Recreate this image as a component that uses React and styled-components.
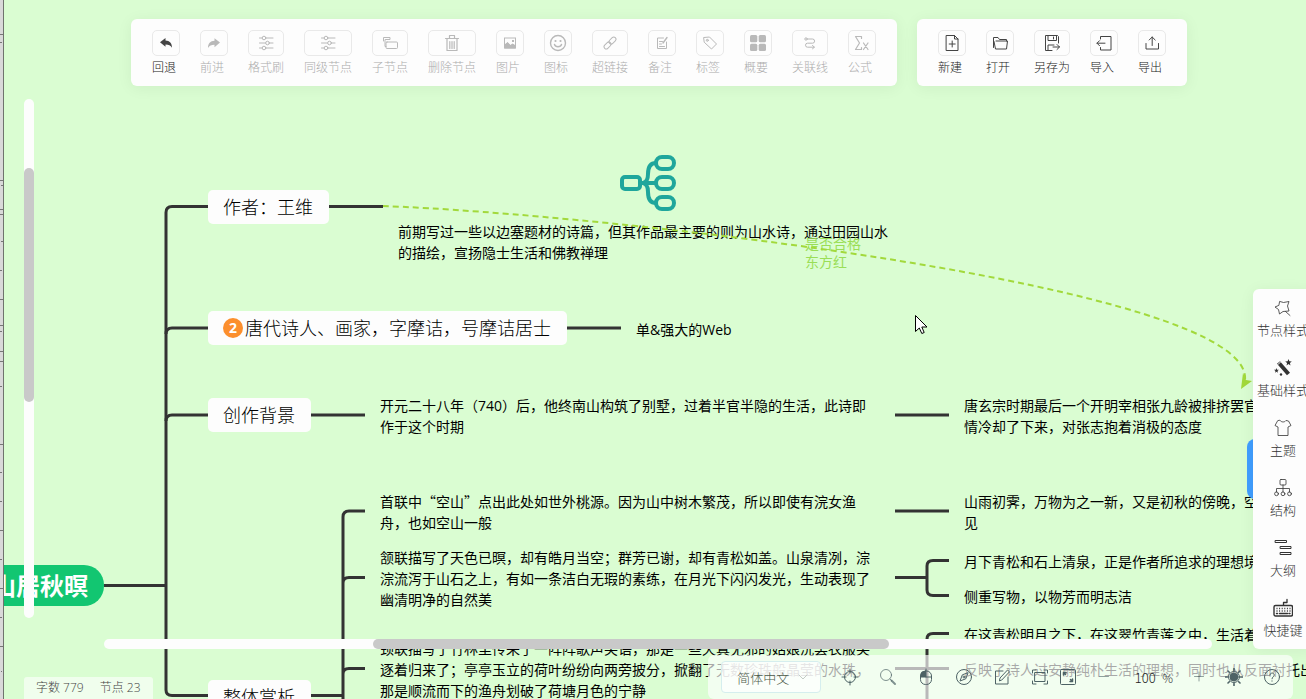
import React from 'react';
import styled, { createGlobalStyle } from 'styled-components';

const GlobalStyle = createGlobalStyle`
  * { box-sizing: border-box; }
  html, body { margin: 0; overflow: hidden; }
  body, button, select, input {
    font-family: 'Noto Sans CJK SC', sans-serif;
    font-weight: 300;
  }
`;

const Page = styled.div`
  display: flex;
  height: 100vh;
  overflow: hidden;
`;

const Gutter = styled.div`
  flex: none;
  width: 4px;
  background: #d9d9d9;
  border-right: 1px solid #6f736e;

  svg { display: block; }
`;

const Canvas = styled.main`
  position: relative;
  flex: 1;
  min-width: 0;
  overflow: hidden;
  background: #dafdd2;
`;

/* ---------- mind map ---------- */

const Board = styled.div`
  position: absolute;
  inset: 0 0 0 -4px;
`;

const Wires = styled.svg`
  position: absolute;
  left: 0;
  top: 0;
  width: 100%;
  height: 100%;
  overflow: hidden;
`;

const Placed = styled.div`
  position: absolute;
  left: ${(p) => p.$x}px;
  top: ${(p) => p.$y}px;
  white-space: nowrap;
`;

const RootTopic = styled(Placed)`
  height: 41px;
  padding: 0 16px 0 12px;
  border-radius: 20px;
  background: #12c671;
  color: #fff;
  font-size: 24px;
  font-weight: 700;
  line-height: 39px;
`;

const Topic = styled(Placed)`
  display: flex;
  align-items: center;
  gap: 2px;
  height: 34px;
  padding: 0 16px 0 15px;
  border-radius: 5px;
  background: #fdfdfd;
  color: #000;
  font-size: 18px;
  line-height: 32px;
`;

const TopicText = styled.span`
  padding-bottom: 2px;
`;

const Priority = styled.span`
  width: 20px;
  height: 20px;
  border-radius: 50%;
  background: #fc8f2d;
  color: #fff;
  font: 700 14px/20px 'Open Sans', sans-serif;
  text-align: center;
`;

const Note = styled(Placed)`
  color: ${(p) => p.$color || '#000'};
  font-family: ${(p) => (p.$latin ? "'Open Sans', " : '')}'Noto Sans CJK SC', sans-serif;
  font-size: 14px;
  font-weight: 400;
  line-height: ${(p) => p.$leading || 21}px;
`;

/* ---------- top toolbar ---------- */

const TopDock = styled.div`
  position: absolute;
  top: 19px;
  left: 8px;
  right: 0;
  display: flex;
  justify-content: center;
  gap: 20px;
`;

const Toolbar = styled.div`
  display: flex;
  gap: 20px;
  height: 67px;
  padding: 11px 21px 0;
  border-radius: 6px;
  background: #fdfdfd;
  box-shadow: 0 2px 16px rgba(0, 0, 0, 0.06);
`;

const Tool = styled.button`
  display: flex;
  flex-direction: column;
  align-items: stretch;
  gap: 3px;
  min-width: 28px;
  padding: 0;
  border: 0;
  background: none;
  color: ${(p) => (p.$off ? '#acacac' : '#222')};
  font-size: 12px;
  line-height: 16px;
  text-align: left;
  white-space: nowrap;
`;

const IconBox = styled.span`
  display: flex;
  align-items: center;
  justify-content: center;
  height: 26px;
  border: 1px solid #e9e9e9;
  border-radius: 5px;
  color: ${(p) => (p.$off ? '#b9b9b9' : '#444')};
`;

/* ---------- side panel ---------- */

const SidePanel = styled.nav`
  position: absolute;
  top: 289px;
  right: -7px;
  width: 60px;
  border-radius: 6px 0 0 6px;
  background: #fdfdfd;
  box-shadow: 0 2px 16px rgba(0, 0, 0, 0.06);
`;

const SideItem = styled.button`
  display: flex;
  flex-direction: column;
  align-items: center;
  gap: 3px;
  width: 100%;
  height: 60px;
  padding: 9px 0 0;
  border: 0;
  background: none;
  color: #333;
  font-size: 13px;
  line-height: 18px;
  white-space: nowrap;
`;

const SideHandle = styled.div`
  position: absolute;
  top: 439px;
  right: 0;
  width: 59px;
  height: 60px;
  border-radius: 8px;
  background: #409eff;
`;

/* ---------- scrollbars ---------- */

const TrackY = styled.div`
  position: absolute;
  left: 20px;
  top: 99px;
  bottom: 81px;
  width: 10px;
  padding-top: 69px;
  border-radius: 5px;
  background: #fdfdfd;
`;

const ThumbY = styled.div`
  height: 52%;
  border-radius: 5px;
  background: #c9c9c9;
`;

const TrackX = styled.div`
  position: absolute;
  left: 100px;
  right: 94px;
  bottom: 50px;
  height: 10px;
  padding-left: 269px;
  border-radius: 5px;
  background: #fdfdfd;
`;

const ThumbX = styled.div`
  width: 61.5%;
  height: 10px;
  border-radius: 5px;
  background: #c9c9c9;
`;

/* ---------- bottom bars ---------- */

const Status = styled.div`
  position: absolute;
  left: 20px;
  bottom: 0;
  display: flex;
  gap: 16px;
  height: 22px;
  padding: 0 12px;
  border-radius: 3px 3px 0 0;
  background: rgba(255, 255, 255, 0.6);
  color: #444;
  font-family: 'Open Sans', 'Noto Sans CJK SC', sans-serif;
  font-size: 12px;
  line-height: 22px;
`;

const BottomBar = styled.div`
  position: absolute;
  right: 13px;
  bottom: 0;
  display: flex;
  align-items: center;
  height: 44px;
  padding: 0 11px 0 13px;
  border-radius: 6px;
  background: rgba(255, 255, 255, 0.66);
`;

const LangWrap = styled.div`
  position: relative;
  display: flex;
  width: 100px;
  margin-right: 19px;
  color: #c4ccc4;

  svg {
    position: absolute;
    right: 12px;
    top: 10px;
  }
`;

const Lang = styled.select`
  width: 100%;
  height: 32px;
  padding: 0 15px;
  border: 1px solid #d5eeee;
  border-radius: 4px;
  background: rgba(255, 255, 255, 0.7);
  color: #4c5a4a;
  font-size: 13px;
  appearance: none;
`;

const BarButton = styled.button`
  display: flex;
  align-items: center;
  justify-content: center;
  width: 20px;
  height: 20px;
  margin-right: ${(p) => (p.$gap === undefined ? 18 : p.$gap)}px;
  padding: 0;
  border: 0;
  background: none;
  color: #4d6265;
`;

const Zoom = styled.label`
  display: flex;
  align-items: center;
  gap: 4px;
  margin-right: 16px;
  color: #333;
  font-size: 12px;
`;

const ZoomInput = styled.input`
  width: 26px;
  padding: 0;
  border: 0;
  background: none;
  color: #222;
  font-size: 13px;
  text-align: center;
`;

const Cursor = styled.svg`
  position: absolute;
  left: 911px;
  top: 315px;
`;

/* ---------- icons ---------- */

function Icon({ size = 18, w = 1, children }) {
  return (
    <svg width={size} height={size} viewBox={`0 0 ${size} ${size}`} fill="none" stroke="currentColor"
      strokeWidth={w} strokeLinecap="round" strokeLinejoin="round" aria-hidden="true">
      {children}
    </svg>
  );
}

const fill = { fill: 'currentColor', stroke: 'none' };

const Sliders = (
  <>
    <path d="M2.5 4H5M9 4h7M2.500 9H8.500M12.500 9H16M2.500 14H5M9 14h7" />
    <circle cx="7" cy="4" r="1.800" /><circle cx="10.500" cy="9" r="1.800" /><circle cx="7" cy="14" r="1.800" />
  </>
);

const TOOL_ICONS = {
  undo: <path {...fill} d="M3 8.200 8.500 4v2.500c4.200.2 6.500 2.600 6.500 7.300C13.600 11.300 11.800 10.400 8.500 10.400v2.400z" />,
  redo: <path {...fill} d="M15 8.600 9.500 4.200v2.600C5.300 7 3 9.400 3 14c1.400-2.400 3.200-3.300 6.500-3.300v2.500z" />,
  sliders: Sliders,
  child: <><path d="M2.500 7V3.500H9V5.500H4.500M4 6v6.500H5" /><rect x="5" y="8" width="11.500" height="6.500" rx="1" /></>,
  trash: <path d="M2.500 4.500h13M6.500 4V1.500h5V4M4 5v11.500h10V5M6.800 7.500v7M9 7.500v7M11.200 7.500v7" strokeWidth="1.200" />,
  image: <><path {...fill} fillRule="evenodd" d="M3 3.500h12v11H3zM4 4.500v6l2.500-2.500 3 3 2-1.500L14 11V4.500z" /><path {...fill} d="M3.500 10.500 6.500 8.500l3 3 2-1.500 3 1.500v3h-11z" /><rect x="11" y="6" width="2" height="2" {...fill} /></>,
  smile: <><circle cx="9" cy="9" r="7.500" strokeWidth="1.400" /><path d="M5.500 10.500c1 3 6 3 7 0" strokeWidth="1.400" /><circle cx="6.500" cy="7" r="1.100" {...fill} /><circle cx="11.500" cy="7" r="1.100" {...fill} /></>,
  link: <g transform="rotate(-45 9 9)"><rect x="1.500" y="6.800" width="8" height="4.400" rx="2.200" /><rect x="8.500" y="6.800" width="8" height="4.400" rx="2.200" /></g>,
  note: <><path d="M10.500 4H4.500v10.500h9V8" /><path d="M6.500 7.500h3M6.500 10h2M6.500 12.500h5" /><path d="m10 9 4-5.500" strokeWidth="1.400" /></>,
  tag: <><path d="M3 3.500 8.500 3l7 7L10.500 15 3.500 8.500z" /><circle cx="6.300" cy="6.300" r="1" /></>,
  grid: <><rect x="1" y="1" width="7.300" height="7.300" rx="1.500" {...fill} /><rect x="9.700" y="1" width="7.300" height="7.300" rx="1.500" {...fill} /><rect x="1" y="9.700" width="7.300" height="7.300" rx="1.500" {...fill} /><rect x="9.700" y="9.700" width="7.300" height="7.300" rx="1.500" {...fill} /></>,
  relation: <><circle cx="5" cy="5" r="1.200" /><path d="M6.500 5H11.500a2 2 0 0 1 0 4.200H6.500a2 2 0 0 0 0 4H13M11.500 11.500 13.500 13.200 11.500 14.800" /></>,
  formula: <><path d="M8.500 4.500V2.500H2.500L6.500 9 2.500 15.500H8.500V13.500" strokeWidth="1.200" /><path d="m10.500 9 4.500 6.500M15 9l-4.500 6.500" strokeWidth="1.200" /></>,
  create: <path d="M3.500 1.500h8l3.500 3.500v11.500H3.500zM11.500 1.500V5H15M9.200 7v6M6.200 10h6" />,
  open: <path d="M2.500 13.500V3.500H7l1.500 2h7v1.500M5 7h11.500l-1 8H4.500L3 7.500" />,
  save: <><path d="M9 16.500H2.500V1.500h12l1 1V9M5 1.500V6.500h8.500V1.500M5 16.500V11h6M10.500 3v2M10 13h6.500M14 10.500l2.500 2.500-2.500 2.500" /></>,
  importIn: <path d="M5.500 5V2.500h10.500v13.500H5.500V13.500M10 9.200H2M4.500 6.700 2 9.200l2.500 2.500" />,
  exportOut: <path d="M3 9.500V15h12.500V9.500M9.200 11.500V3M6.200 6l3-3 3 3" />,
};

const SIDE_ICONS = {
  style: <path d="M7 3.500 10.500 4.500 16 3.500 14.500 8 16 13 10 13.500 6.500 16 5.500 11.500 2 9 5.500 7.500zM12.500 13.500 17 17.500" strokeWidth=".8" />,
  magic: <><path d="m5.500 4.500 10 11.500" strokeWidth="4" strokeLinecap="butt" /><path d="m5 6.500 2.500-2.500" stroke="#fff" /><path {...fill} d="m15.500 1 .9 2.300 2.400.2-1.900 1.500.6 2.400-2-1.300-2 1.300.6-2.400-1.900-1.500 2.400-.2zM3.500 10l.6 1.700 1.800.1-1.400 1.100.5 1.800-1.500-1-1.500 1 .5-1.800L1 11.800l1.800-.1z" /><circle cx="8" cy="16.500" r="1.200" {...fill} /></>,
  theme: <path d="M7 2.500c1.500 2 4.500 2 6 0l2.500.5 2.500 4.500-3 1.500V17.500H5V9L2 7.500 4.500 3z" strokeWidth=".8" />,
  structure: <g strokeWidth=".8"><rect x="7" y="1.500" width="6" height="5.500" rx="1" /><path d="M10 7v7M3.500 14v-3.500h13V14" /><circle cx="3.500" cy="15.800" r="1.900" /><circle cx="10" cy="15.800" r="1.900" /><circle cx="16.500" cy="15.800" r="1.900" /></g>,
  outline: <><rect x="2.500" y="2.500" width="11" height="2" /><rect x="7.500" y="8.500" width="10.500" height="2" /><rect x="7.500" y="14.500" width="10.500" height="2" /></>,
  keyboard: <><rect x="1" y="7.500" width="18.500" height="10.500" rx="1.500" strokeWidth="1.400" /><path d="M10.500 7V4.500H14V1.500" strokeWidth="1.300" /><path d="M3.500 10.500h14M3.500 13h14" strokeWidth="1.600" strokeDasharray="1 1.600" strokeLinecap="butt" /><path d="M3.500 15.500h1M6.500 15.500h8M16 15.500h1" strokeWidth="1.400" /></>,
};

const MAIN_TOOLS = [
  ['undo', '回退', false], ['redo', '前进', true], ['sliders', '格式刷', true], ['sliders', '同级节点', true],
  ['child', '子节点', true], ['trash', '删除节点', true], ['image', '图片', true], ['smile', '图标', true],
  ['link', '超链接', true], ['note', '备注', true], ['tag', '标签', true], ['grid', '概要', true],
  ['relation', '关联线', true], ['formula', '公式', true],
];

const FILE_TOOLS = [
  ['create', '新建'], ['open', '打开'], ['save', '另存为'], ['importIn', '导入'], ['exportOut', '导出'],
];

const SIDE_ITEMS = [
  ['style', '节点样式'], ['magic', '基础样式'], ['theme', '主题'],
  ['structure', '结构'], ['outline', '大纲'], ['keyboard', '快捷键'],
];

const NOTES = [
  [398, 221, ['前期写过一些以边塞题材的诗篇，但其作品最主要的则为山水诗，通过田园山水', '的描绘，宣扬隐士生活和佛教禅理']],
  [636, 319, ['单&强大的Web'], true],
  [380, 395, ['开元二十八年（740）后，他终南山构筑了别墅，过着半官半隐的生活，此诗即', '作于这个时期'], true],
  [964, 395, ['唐玄宗时期最后一个开明宰相张九龄被排挤罢官', '情冷却了下来，对张志抱着消极的态度']],
  [380, 491, ['首联中“空山”点出此处如世外桃源。因为山中树木繁茂，所以即使有浣女渔', '舟，也如空山一般']],
  [964, 491, ['山雨初霁，万物为之一新，又是初秋的傍晚，空', '见']],
  [380, 547, ['颔联描写了天色已暝，却有皓月当空；群芳已谢，却有青松如盖。山泉清冽，淙', '淙流泻于山石之上，有如一条洁白无瑕的素练，在月光下闪闪发光，生动表现了', '幽清明净的自然美']],
  [964, 551, ['月下青松和石上清泉，正是作者所追求的理想境']],
  [964, 586, ['侧重写物，以物芳而明志洁']],
  [380, 638, ['颈联描写了竹林里传来了一阵阵歌声笑语，那是一些天真无邪的姑娘洗罢衣服笑', '逐着归来了；亭亭玉立的荷叶纷纷向两旁披分，掀翻了无数珍珠般晶莹的水珠，', '那是顺流而下的渔舟划破了荷塘月色的宁静']],
  [964, 624, ['在这青松明月之下，在这翠竹青莲之中，生活着']],
  [964, 659, ['反映了诗人过安静纯朴生活的理想，同时也从反面衬托出']],
];

function ToolItem({ icon, label, off }) {
  return (
    <Tool $off={off} disabled={off}>
      <IconBox $off={off}><Icon>{TOOL_ICONS[icon]}</Icon></IconBox>
      {label}
    </Tool>
  );
}

function MindMap() {
  return (
    <Board>
      <Wires>
        <g fill="none" stroke="#333" strokeWidth="3">
          <path d="M104 585.500H166M208 206.500H172Q166 206.500 166 212.500V690Q166 695.500 172 695.500H208" />
          <path d="M208 328H172Q166 328 166 334M208 415H172Q166 415 166 421" />
          <path d="M329 206.500H383M567 328H621M311 415H365M311 695.500H343" />
          <path d="M365 511H349Q343 511 343 517V700M365 577.500H349Q343 577.500 343 583M365 668.500H349Q343 668.500 343 674" />
          <path d="M895 415H949M895 511H949M895 577.500H927" />
          <path d="M949 560.500H933Q927 560.500 927 566V590Q927 595.500 933 595.500H949" />
          <path d="M949 633.500H933Q927 633.500 927 639V700M895 668.500H949" />
        </g>
        <g fill="none" stroke="#1fa69c" strokeWidth="4">
          <rect x="622" y="177" width="18" height="12" rx="3" />
          <rect x="656" y="157" width="18" height="12" rx="6" />
          <rect x="656" y="177" width="18" height="12" rx="6" />
          <rect x="656" y="197" width="18" height="12" rx="6" />
          <path d="M641 183H656M643 183Q648 182 648 174Q648 163 656 163M643 183Q648 184 648 192Q648 203 656 203" />
        </g>
      </Wires>
      <RootTopic $x={-20} $y={565}>山居秋暝</RootTopic>
      <Topic $x={208} $y={190}><TopicText>作者：王维</TopicText></Topic>
      <Topic $x={208} $y={311}><Priority>2</Priority><TopicText>唐代诗人、画家，字摩诘，号摩诘居士</TopicText></Topic>
      <Topic $x={208} $y={398}><TopicText>创作背景</TopicText></Topic>
      <Topic $x={208} $y={680}><TopicText>整体赏析</TopicText></Topic>
      {NOTES.map(([x, y, lines, latin]) => (
        <Note key={`${x}-${y}`} $x={x} $y={y} $latin={latin}>
          {lines.map((line) => <div key={line}>{line}</div>)}
        </Note>
      ))}
      <Note $x={805} $y={234} $leading={18} $color="#9ade57">
        <div>是否合格</div>
        <div>东方红</div>
      </Note>
      <Wires>
        <path d="M383 206C600 214 1254 286 1245 380" fill="none" stroke="#a2d93c" strokeWidth="2" strokeDasharray="6 4" />
        <path d="M1243 373 1246 380 1252 381 1241 389z" fill="#a2d93c" />
      </Wires>
    </Board>
  );
}

export default function App() {
  return (
    <Page>
      <GlobalStyle />
      <Gutter>
        <svg width="3" height="699" viewBox="0 0 3 699" stroke="#777" aria-hidden="true">
          <path d="M0 34.500h3M0 42.500h2M0 180.500h3M1 185.500h2M0 209.500h3M0 214.500h3M1 241.500h2M0 270.500h2M0 299.500h3M0 325.500h3M0 331.500h2M0 351.500h3M0 361.500h3M0 386.500h2M0 444.500h3M0 472.500h2M0 501.500h2M0 530.500h3M0 559.500h2M0 588.500h3M0 617.500h2M0 646.500h3M1 671.500h1" />
        </svg>
      </Gutter>
      <Canvas>
        <MindMap />
        <TrackY><ThumbY /></TrackY>
        <TrackX><ThumbX /></TrackX>

        <TopDock>
          <Toolbar>
            {MAIN_TOOLS.map(([icon, label, off]) => <ToolItem key={label} icon={icon} label={label} off={off} />)}
          </Toolbar>
          <Toolbar>
            {FILE_TOOLS.map(([icon, label]) => <ToolItem key={label} icon={icon} label={label} off={false} />)}
          </Toolbar>
        </TopDock>

        <SideHandle />
        <SidePanel>
          {SIDE_ITEMS.map(([icon, label]) => (
            <SideItem key={label}>
              <Icon size={20}>{SIDE_ICONS[icon]}</Icon>
              {label}
            </SideItem>
          ))}
        </SidePanel>

        <Status>
          <span>字数 779</span>
          <span>节点 23</span>
        </Status>

        <BottomBar>
          <LangWrap>
            <Lang aria-label="语言" defaultValue="zh">
              <option value="zh">简体中文</option>
            </Lang>
            <Icon size={12}><path d="m2 4 4 4 4-4" /></Icon>
          </LangWrap>
          <BarButton aria-label="定位">
            <Icon><circle cx="9" cy="9" r="5.500" /><path d="M9 1v4M9 13v4M1 9h4M13 9h4" /></Icon>
          </BarButton>
          <BarButton aria-label="搜索">
            <Icon><circle cx="7" cy="7" r="5.500" opacity=".7" /><path d="m11 11 1.500 1.500" opacity=".7" /><path d="m12.500 12.500 3.500 3.500" strokeWidth="2" opacity=".7" /></Icon>
          </BarButton>
          <BarButton aria-label="鼠标">
            <Icon><rect x="3.500" y="3" width="11" height="13.500" rx="5" /><path d="M3.500 9h11M9 1v8" /><path {...fill} d="M3.500 9V7a4 4 0 0 1 4-4H9v6z" /></Icon>
          </BarButton>
          <BarButton aria-label="导航">
            <Icon><circle cx="9" cy="9" r="7.500" /><path d="M13 5 10.800 10.800 5 13 7.200 7.200z" /><circle cx="9" cy="9" r="1" /></Icon>
          </BarButton>
          <BarButton aria-label="编辑">
            <Icon><path d="M10 3H2.500v13H15V9" /><path d="M6.500 12.500 7 10l7.500-8 2 1.800-7.500 8z" /></Icon>
          </BarButton>
          <BarButton aria-label="适应画布" $gap={8}>
            <Icon><rect x="4" y="4.500" width="10" height="9" /><path d="M1.500 5V2H5M13 2h3.500v3M16.500 13v3H13M5 16H1.500V13" /></Icon>
          </BarButton>
          <BarButton aria-label="全屏" $gap={16}>
            <Icon><rect x="1.500" y="1.500" width="15" height="15" rx="1" /><path d="M4.500 7V4.500H7M4.500 4.500l2 2M13.500 11v2.500H11M13.500 13.500l-2-2" strokeWidth="1.500" /></Icon>
          </BarButton>
          <BarButton aria-label="缩小" $gap={18}>
            <Icon><path d="M4.500 8.500h9" opacity=".6" /></Icon>
          </BarButton>
          <Zoom>
            <ZoomInput defaultValue="100" aria-label="缩放" />%
          </Zoom>
          <BarButton aria-label="放大" $gap={15}>
            <Icon><path d="M4.500 8.500h9M9 4v9" opacity=".6" /></Icon>
          </BarButton>
          <BarButton aria-label="主题亮度">
            <Icon><circle cx="9" cy="9" r="4" fill="currentColor" /><circle cx="9" cy="9" r="5.500" /><path d="M9 .5v2M9 15.500v2M.5 9h2M15.500 9h2M3 3l1.300 1.300M13.700 13.700 15 15M3 15l1.300-1.300M13.700 4.300 15 3" strokeWidth="1.600" /></Icon>
          </BarButton>
          <BarButton aria-label="帮助" $gap={0}>
            <Icon><circle cx="9" cy="9" r="7.500" /><path d="M6.800 7.200c0-3 4.600-2.700 4.400 0 0 1.500-2.200 1.700-2.200 3.600M9 12.800v.4" /></Icon>
          </BarButton>
        </BottomBar>

        <Cursor width="13" height="20" viewBox="0 0 13 20" aria-hidden="true">
          <path d="M.5.500V16.500L4.300 13 6.800 18.500 9.200 17.500 6.800 12H12z" fill="#fff" stroke="#000" />
        </Cursor>
      </Canvas>
    </Page>
  );
}
